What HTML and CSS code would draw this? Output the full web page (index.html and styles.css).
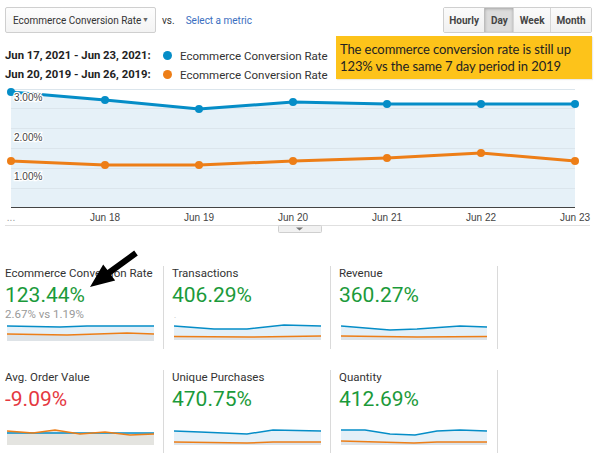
FILE: index.html
```html
<!DOCTYPE html>
<html>
<head>
<meta charset="utf-8">
<link rel="stylesheet" href="styles.css">
</head>
<body>
<div class="page">
  <div class="toolbar">
    <div class="select"><span>Ecommerce Conversion Rate</span><span class="caret">&#9660;</span></div>
    <span class="vs">vs.</span>
    <span class="link">Select a metric</span>
    <div class="btn-group">
      <span class="btn">Hourly</span>
      <span class="btn active">Day</span>
      <span class="btn">Week</span>
      <span class="btn">Month</span>
    </div>
  </div>

  <div class="summary">
    <div class="legend">
      <div class="legend-row"><b>Jun 17, 2021 - Jun 23, 2021:</b><span class="dot blue"></span><span>Ecommerce Conversion Rate</span></div>
      <div class="legend-row"><b>Jun 20, 2019 - Jun 26, 2019:</b><span class="dot orange"></span><span>Ecommerce Conversion Rate</span></div>
    </div>
    <div class="note">The ecommerce conversion rate is still up<br>123% vs the same 7 day period in 2019</div>
  </div>

  <svg class="chart" width="600" height="150" viewBox="0 85 600 150">
    <polygon class="area" points="11,92 105,100 199,109 293,102 387,104 481,104 575,104 575,207 11,207"/>
    <g class="grid">
      <line x1="11" y1="89.5" x2="575" y2="89.5"/>
      <line x1="11" y1="108.5" x2="575" y2="108.5"/>
      <line x1="11" y1="128.5" x2="575" y2="128.5"/>
      <line x1="11" y1="148.5" x2="575" y2="148.5"/>
      <line x1="11" y1="168.5" x2="575" y2="168.5"/>
      <line x1="11" y1="188.5" x2="575" y2="188.5"/>
    </g>
    <line class="axis" x1="11" y1="207.5" x2="575" y2="207.5"/>
    <polyline class="line-blue" points="11,92 105,100 199,109 293,102 387,104 481,104 575,104"/>
    <polyline class="line-orange" points="11,161 105,165 199,165 293,161 387,158 481,153 575,161"/>
    <g class="dots-blue">
      <circle cx="11" cy="92" r="4"/><circle cx="105" cy="100" r="4"/><circle cx="199" cy="109" r="4"/><circle cx="293" cy="102" r="4"/><circle cx="387" cy="104" r="4"/><circle cx="481" cy="104" r="4"/><circle cx="575" cy="104" r="4"/>
    </g>
    <g class="dots-orange">
      <circle cx="11" cy="161" r="4"/><circle cx="105" cy="165" r="4"/><circle cx="199" cy="165" r="4"/><circle cx="293" cy="161" r="4"/><circle cx="387" cy="158" r="4"/><circle cx="481" cy="153" r="4"/><circle cx="575" cy="161" r="4"/>
    </g>
    <g class="ylabels">
      <text x="14" y="101">3.00%</text>
      <text x="14" y="141">2.00%</text>
      <text x="14" y="180">1.00%</text>
    </g>
    <g class="xlabels">
      <text x="11" y="221" class="dots-label">...</text>
      <text x="105" y="221">Jun 18</text>
      <text x="199" y="221">Jun 19</text>
      <text x="293" y="221">Jun 20</text>
      <text x="387" y="221">Jun 21</text>
      <text x="481" y="221">Jun 22</text>
      <text x="575" y="221">Jun 23</text>
    </g>
    <line class="sep" x1="5" y1="225.5" x2="590" y2="225.5"/>
    <rect class="tab" x="278.5" y="225.5" width="43" height="7" rx="1"/>
    <polygon class="tab-arrow" points="296,227.5 303,227.5 299.5,230.5"/>
  </svg>

  <div class="cards">
    <div class="card">
      <div class="card-title">Ecommerce Conversion Rate</div>
      <div class="card-value up">123.44%</div>
      <div class="card-sub">2.67% vs 1.19%</div>
      <svg class="spark" width="148" height="20" viewBox="0 0 148 20">
        <polygon class="sa-blue" points="0,2 53,3 80,2 147,2 147,17 0,17"/>
        <polygon class="sa-gray" points="0,10 60,11 120,9 147,10 147,17 0,17"/>
        <polyline class="sl-orange" points="0,10 60,11 120,9 147,10"/>
        <polyline class="sl-blue" points="0,2 53,3 80,2 147,2"/>
      </svg>
    </div>
    <div class="card">
      <div class="card-title">Transactions</div>
      <div class="card-value up">406.29%</div>
      <div class="card-sub"><span class="speck">.</span></div>
      <svg class="spark" width="148" height="20" viewBox="0 0 148 20">
        <polygon class="sa-blue" points="0,2 40,5 73,5 110,1 147,2 147,16 0,16"/>
        <polygon class="sa-gray" points="0,12.5 74,13 147,12 147,16 0,16"/>
        <polyline class="sl-orange" points="0,12.5 74,13 147,12"/>
        <polyline class="sl-blue" points="0,2 40,5 73,5 110,1 147,2"/>
      </svg>
    </div>
    <div class="card">
      <div class="card-title">Revenue</div>
      <div class="card-value up">360.27%</div>
      <div class="card-sub"></div>
      <svg class="spark" width="148" height="20" viewBox="0 0 148 20">
        <polygon class="sa-blue" points="0,2 49,6 76,5 119,2 146,3 146,16 0,16"/>
        <polygon class="sa-gray" points="0,12 76,13 146,12.5 146,16 0,16"/>
        <polyline class="sl-orange" points="0,12 76,13 146,12.5"/>
        <polyline class="sl-blue" points="0,2 49,6 76,5 119,2 146,3"/>
      </svg>
    </div>
    <div class="card">
      <div class="card-title">Avg. Order Value</div>
      <div class="card-value down">-9.09%</div>
      <div class="card-sub"></div>
      <svg class="spark" width="148" height="20" viewBox="0 0 148 20">
        <polygon class="sa-blue" points="0,5 147,5 147,17 0,17"/>
        <polygon class="sa-gray2" points="0,3 26,5 48,2 73,6 98,4 123,7 147,6 147,17 0,17"/>
        <polyline class="sl-blue" points="0,5 147,5"/>
        <polyline class="sl-orange" points="0,3 26,5 48,2 73,6 98,4 123,7 147,6"/>
      </svg>
    </div>
    <div class="card">
      <div class="card-title">Unique Purchases</div>
      <div class="card-value up">470.75%</div>
      <div class="card-sub"></div>
      <svg class="spark" width="148" height="20" viewBox="0 0 148 20">
        <polygon class="sa-blue" points="0,3 26,4 73,6 99,2 147,3 147,17 0,17"/>
        <polygon class="sa-gray" points="0,14 73,15 99,14 147,14 147,17 0,17"/>
        <polyline class="sl-orange" points="0,14 73,15 99,14 147,14"/>
        <polyline class="sl-blue" points="0,3 26,4 73,6 99,2 147,3"/>
      </svg>
    </div>
    <div class="card">
      <div class="card-title">Quantity</div>
      <div class="card-value up">412.69%</div>
      <div class="card-sub"></div>
      <svg class="spark" width="148" height="20" viewBox="0 0 148 20">
        <polygon class="sa-blue" points="0,2 24,2 49,6 74,7 96,3 119,2 146,3 146,17 0,17"/>
        <polygon class="sa-gray" points="0,13 73,15 96,14 146,14 146,17 0,17"/>
        <polyline class="sl-orange" points="0,13 73,15 96,14 146,14"/>
        <polyline class="sl-blue" points="0,2 24,2 49,6 74,7 96,3 119,2 146,3"/>
      </svg>
    </div>
  </div>

  <svg class="pointer" width="600" height="463" viewBox="0 0 600 463">
    <polygon points="90,287 115.2,280.5 111,274.9 137.8,255.4 134.2,250.6 107.4,270.1 103.2,264.5"/>
  </svg>
</div>
</body>
</html>
```

FILE: styles.css
```css
* { box-sizing: border-box; }
html, body { margin: 0; padding: 0; background: #fff; }
body { font-family: Roboto, "Liberation Sans", Arial, sans-serif; color: #333; }

.page { position: relative; width: 600px; height: 463px; overflow: hidden; }

.toolbar {
  display: flex;
  align-items: center;
  height: 33px;
  padding: 7px 8px 0 5px;
}
.select {
  width: 151px;
  height: 26px;
  border: 1px solid #cfcfcf;
  border-radius: 2px;
  background: linear-gradient(#fdfdfd, #f3f3f3);
  display: flex;
  align-items: center;
  justify-content: space-between;
  padding: 0 6px 0 7px;
  font-size: 10px;
  color: #333;
  white-space: nowrap;
}
.caret { font-size: 7px; color: #666; }
.vs { margin-left: 6px; font-size: 10px; color: #333; }
.link { margin-left: 11px; font-size: 10px; color: #3a6ec0; }

.btn-group {
  margin-left: auto;
  display: flex;
  height: 26px;
  border: 1px solid #cfcfcf;
  border-radius: 2px;
}
.btn {
  display: flex;
  align-items: center;
  justify-content: center;
  padding: 0 5.5px;
  font-size: 10px;
  font-weight: bold;
  color: #444;
  background: linear-gradient(#fbfbfb, #f0f0f0);
  border-left: 1px solid #d6d6d6;
}
.btn:first-child { border-left: none; }
.btn.active {
  background: #dcdcdc;
  box-shadow: inset 0 1px 3px rgba(0,0,0,0.25);
  border-left-color: #bdbdbd;
}

.summary {
  display: flex;
  height: 52px;
  padding-top: 3px;
}
.legend { padding: 10px 0 0 5px; }
.legend-row {
  display: flex;
  align-items: center;
  height: 19px;
  font-size: 11.5px;
  color: #333;
  white-space: nowrap;
}
.legend-row b { font-weight: bold; font-size: 11.3px; color: #222; width: 158px; }
.dot { width: 9px; height: 9px; border-radius: 50%; margin: 0 8px 0 0; }
.dot.blue { background: #058dc7; }
.dot.orange { background: #ed7e17; }

.note {
  margin-left: auto;
  margin-right: 8px;
  width: 256px;
  height: 43px;
  background: #fdc31a;
  padding: 5px 0 0 4px;
  font-family: Lato, "Noto Sans", sans-serif;
  font-size: 13px;
  letter-spacing: -0.1px;
  line-height: 17px;
  color: #222;
  white-space: nowrap;
  box-shadow: 1px 1px 1px rgba(0,0,0,0.08);
}

.chart { display: block; }
.area { fill: #e6f1f8; }
.grid line { stroke: #dbe5ec; stroke-width: 1; }
.axis { stroke: #444; stroke-width: 1; }
.line-blue { fill: none; stroke: #058dc7; stroke-width: 3; stroke-linejoin: round; }
.line-orange { fill: none; stroke: #ed7e17; stroke-width: 3; stroke-linejoin: round; }
.dots-blue circle { fill: #058dc7; }
.dots-orange circle { fill: #ed7e17; }
.ylabels text {
  font-family: "Liberation Sans", Arial, sans-serif;
  font-size: 10px;
  fill: #444;
  stroke: #fff;
  stroke-width: 2.5px;
  paint-order: stroke;
}
.xlabels text {
  font-family: "Liberation Sans", Arial, sans-serif;
  font-size: 10px;
  fill: #444;
  text-anchor: middle;
}
.xlabels .dots-label { fill: #999; }
.sep { stroke: #e0e0e0; stroke-width: 1; }
.tab { fill: #f1f1f1; stroke: #cfcfcf; stroke-width: 1; }
.tab-arrow { fill: #777; }

.cards {
  display: grid;
  grid-template-columns: repeat(3, max-content);
  row-gap: 21px;
  padding-left: 5px;
  margin-top: 31px;
}
.card {
  width: 159px;
  padding: 0 8px 5px 0;
  margin-right: 8px;
  border-right: 1px solid #dadada;
}
.card-title { font-size: 11.5px; line-height: 14px; color: #333; white-space: nowrap; }
.card-value {
  margin-top: 3px;
  font-size: 21px;
  line-height: 24px;
  font-weight: 400;
}
.card-value.up { color: #1b9a3a; }
.card-value.down { color: #e5383f; }
.card-sub { height: 14px; font-size: 11.5px; line-height: 14px; color: #999; }
.speck { color: #bbb; font-size: 8px; margin-left: 2px; }
.spark { display: block; margin: 3px 0 0 2px; }
.sa-blue { fill: #e4f0f8; }
.sa-gray { fill: #d8d8d8; opacity: 0.55; }
.sa-gray2 { fill: #e4e4e0; }
.sl-blue { fill: none; stroke: #058dc7; stroke-width: 1.5; }
.sl-orange { fill: none; stroke: #ed7e17; stroke-width: 1.5; }

.pointer { position: absolute; left: 0; top: 0; pointer-events: none; }
.pointer polygon { fill: #000; }
```
